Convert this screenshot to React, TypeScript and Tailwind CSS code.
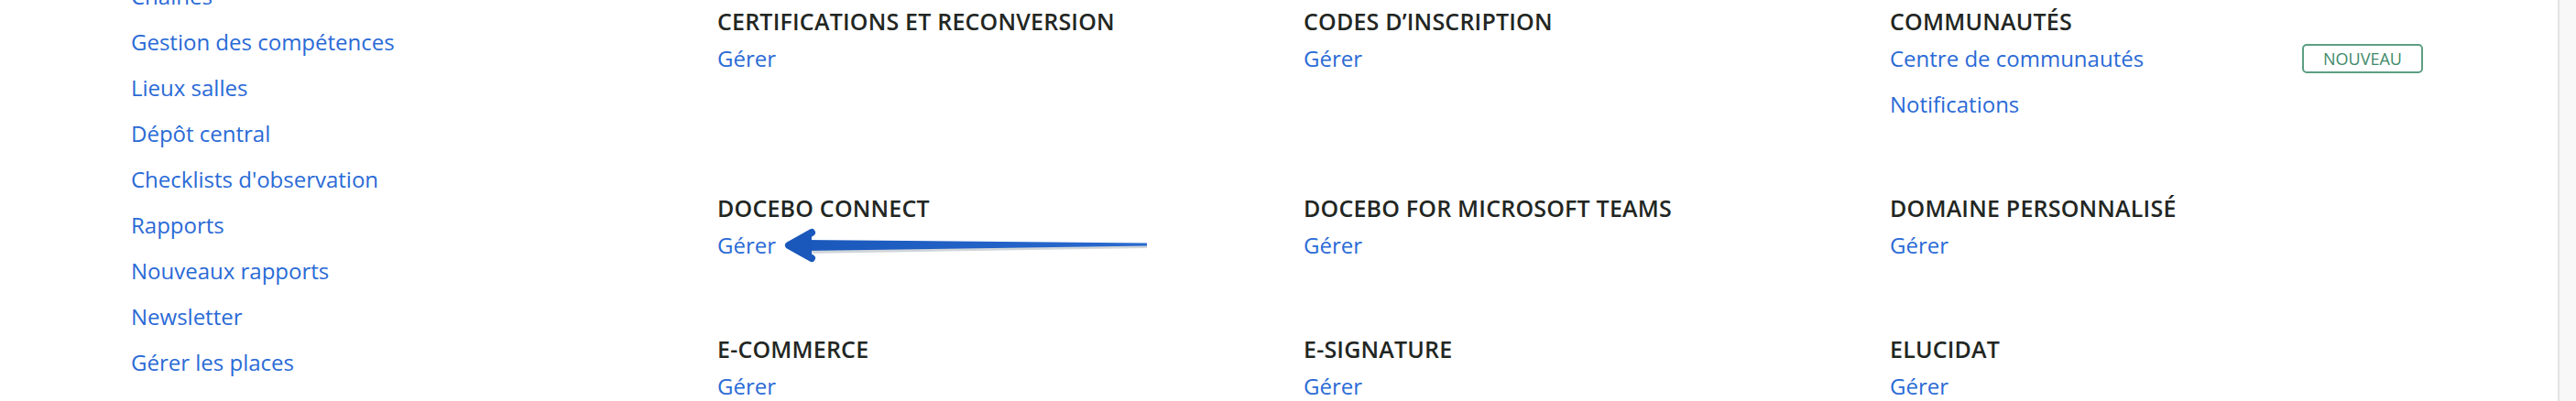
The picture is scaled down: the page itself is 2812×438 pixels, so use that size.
import React from "react";

type Section = {
  title: string;
  links: string[];
  badge?: string;
};

const leftLinks = [
  "Chaînes",
  "Gestion des compétences",
  "Lieux salles",
  "Dépôt central",
  "Checklists d'observation",
  "Rapports",
  "Nouveaux rapports",
  "Newsletter",
  "Gérer les places",
  "Invitations",
];

const sections: Section[] = [
  { title: "Certifications et reconversion", links: ["Gérer"] },
  { title: "Codes d’inscription", links: ["Gérer"] },
  { title: "Communautés", links: ["Centre de communautés", "Notifications"], badge: "Nouveau" },
  { title: "Docebo Connect", links: ["Gérer"] },
  { title: "Docebo for Microsoft Teams", links: ["Gérer"] },
  { title: "Domaine personnalisé", links: ["Gérer"] },
  { title: "E-commerce", links: ["Gérer"] },
  { title: "E-signature", links: ["Gérer"] },
  { title: "Elucidat", links: ["Gérer"] },
];

// annotation arrow drawn over the page
const Arrow = () => (
  <svg
    className="absolute left-0 top-0 pointer-events-none"
    width="1400"
    height="438"
    viewBox="0 0 1400 438"
  >
    <defs>
      <linearGradient id="shaft" x1="0" y1="0" x2="1" y2="0">
        <stop offset="0" stopColor="#1a58bb" />
        <stop offset="1" stopColor="#2a6ad0" />
      </linearGradient>
    </defs>
    <polygon points="880,265 1252,268 1252,271 880,277" fill="#9aa3ad" opacity="0.45" />
    <polygon points="876,262 1252,265.5 1252,268.5 876,274" fill="url(#shaft)" />
    <path
      d="M886 254 L861 268 L886 282"
      fill="none"
      stroke="#1a58bb"
      strokeWidth="8"
      strokeLinecap="round"
      strokeLinejoin="round"
    />
    <polygon points="864,268 886,256 886,280" fill="#1a58bb" />
  </svg>
);

const SectionBlock = ({ section }: { section: Section }) => (
  <div>
    <div className="text-[25px] leading-[32px] font-semibold uppercase tracking-[0.2px] text-[#222622]">
      {section.title}
    </div>
    {section.links.map((link, i) => (
      <div key={link} className="flex items-center justify-between w-[582px]">
        <span className="text-[24px] leading-[50px] text-[#2a6ad6]">{link}</span>
        {section.badge && i === 0 && (
          <span className="border-2 border-[#5c9e82] rounded-[5px] h-[32px] w-[132px] flex items-center justify-center text-[18px] uppercase text-[#3e8a6a]">
            {section.badge}
          </span>
        )}
      </div>
    ))}
  </div>
);

export default function App() {
  return (
    <div
      className="relative flex h-[438px] w-[2812px] overflow-hidden bg-white"
      style={{ fontFamily: '"Open Sans", "Noto Sans", sans-serif' }}
    >
      <div className="flex flex-1 pl-[143px]">
        <div className="w-[640px] -mt-[29px]">
          {leftLinks.map((link) => (
            <div key={link} className="text-[24px] leading-[50px] text-[#2a6ad6]">
              {link}
            </div>
          ))}
        </div>
        <div className="grid grid-cols-[640px_640px_640px] gap-y-[72px] pt-[7px] content-start">
          {sections.map((s) => (
            <SectionBlock key={s.title} section={s} />
          ))}
        </div>
      </div>
      <div className="w-[20px] h-full border-l-2 border-[#e3e3e3] bg-[#f8f8f8]" />
      <Arrow />
    </div>
  );
}
